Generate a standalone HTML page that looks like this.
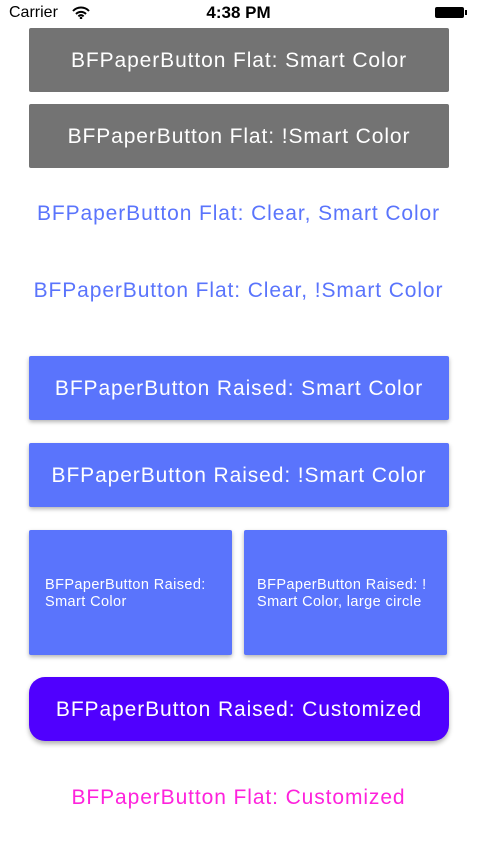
<!DOCTYPE html>
<html><head><style>
body{margin:0;width:477px;height:849px;background:#fff;font-family:"Liberation Sans",sans-serif;position:relative;overflow:hidden}
.a{position:absolute;display:flex;align-items:center;justify-content:center;font-size:21px;letter-spacing:0.9px;color:#fff;padding-top:2px;box-sizing:border-box}
.g{background:#737373;border-radius:2px}
.b{background:#5a74fc;border-radius:2px;box-shadow:0 2px 4px rgba(0,0,0,.3)}
.t{color:#5a74fc}
.s{justify-content:flex-start;font-size:14.5px;letter-spacing:0.4px;line-height:17px;padding-left:16px}
</style></head><body>
<div style="position:absolute;left:9px;top:4px;font-size:16px">Carrier</div>
<svg style="position:absolute;left:72px;top:6px" width="18" height="13" viewBox="0 0 18 13"><path d="M1 5a11 11 0 0 1 16 0M4 8a7 7 0 0 1 10 0M6.5 10.5a3 3 0 0 1 5 0" stroke="#000" stroke-width="2" fill="none"/><circle cx="9" cy="12" r="1.3"/></svg>
<div style="position:absolute;left:0;width:477px;top:3px;text-align:center;font-size:17px;font-weight:bold">4:38 PM</div>
<div style="position:absolute;left:435px;top:7px;width:29px;height:11px;background:#000;border-radius:2px"></div>
<div style="position:absolute;left:465px;top:10px;width:2px;height:5px;background:#000"></div>
<div class="a g" style="left:29px;top:28px;width:420px;height:64px">BFPaperButton Flat: Smart Color</div>
<div class="a g" style="left:29px;top:104px;width:420px;height:64px">BFPaperButton Flat: !Smart Color</div>
<div class="a t" style="left:0;top:196px;width:477px;height:34px">BFPaperButton Flat: Clear, Smart Color</div>
<div class="a t" style="left:0;top:273px;width:477px;height:34px">BFPaperButton Flat: Clear, !Smart Color</div>
<div class="a b" style="left:29px;top:356px;width:420px;height:64px">BFPaperButton Raised: Smart Color</div>
<div class="a b" style="left:29px;top:443px;width:420px;height:64px">BFPaperButton Raised: !Smart Color</div>
<div class="a b s" style="left:29px;top:530px;width:203px;height:125px">BFPaperButton Raised:<br>Smart Color</div>
<div class="a b s" style="left:244px;top:530px;width:203px;height:125px;padding-left:13px">BFPaperButton Raised: !<br>Smart Color, large circle</div>
<div class="a" style="left:29px;top:677px;width:420px;height:64px;background:#5000fe;border-radius:16px;box-shadow:0 3px 5px rgba(0,0,0,.3)">BFPaperButton Raised: Customized</div>
<div class="a" style="left:0;top:780px;width:477px;height:34px;color:#fe22dc">BFPaperButton Flat: Customized</div>
</body></html>
